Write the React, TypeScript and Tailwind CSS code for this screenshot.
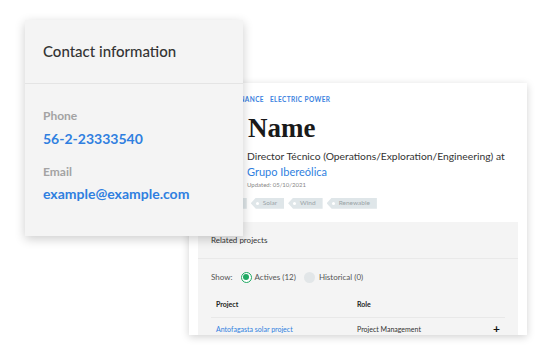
import React from "react";

const sans = "font-['Lato','Liberation_Sans',sans-serif]";

function Tag({ label }: { label: string }) {
  return (
    <div className="relative flex h-[11px] items-center bg-[#dfe6e9] pl-[12px] pr-[7px] text-[6.5px] text-[#9aa3a7] [clip-path:polygon(5px_0,100%_0,100%_100%,5px_100%,0_50%)]">
      <span className="absolute left-[5px] top-[4px] h-[3px] w-[3px] rounded-full bg-white" />
      {label}
    </div>
  );
}

export default function App() {
  return (
    <div className={`relative h-[353px] w-[555px] overflow-hidden bg-white ${sans}`}>
      {/* profile card (behind) */}
      <div className="absolute left-[189px] top-[83px] h-[252px] w-[338px] overflow-hidden bg-white shadow-[0_2px_8px_rgba(0,0,0,0.18)]">
        <div className="pl-[59px] pt-[12px]">
          <div className="-ml-[15px] flex gap-[6px] text-[6.5px] font-bold tracking-[0.4px] text-[#3b82e0]">
            <span>FINANCE</span>
            <span>ELECTRIC POWER</span>
          </div>
          <h1 className="mt-[8px] font-['Liberation_Serif',serif] text-[27px] font-bold leading-[30px] text-[#1a1a1a]">
            Name
          </h1>
          <p className="mt-[6px] -ml-[1px] text-[10.3px] leading-[14px] text-[#333]">
            Director Técnico (Operations/Exploration/Engineering) at
          </p>
          <p className="mt-[1px] -ml-[1px] text-[11px] leading-[16px] text-[#2f7fe0]">Grupo Ibereólica</p>
          <p className="-ml-[1px] text-[6px] leading-[9px] text-[#888]">Updated: 05/10/2021</p>
          <div className="mt-[9px] -ml-[40px] flex gap-[4px]">
            <Tag label="Energy" />
            <Tag label="Solar" />
            <Tag label="Wind" />
            <Tag label="Renewable" />
          </div>
        </div>

        <div className="ml-[9px] mt-[13px] h-[200px] w-[320px] bg-[#f4f4f4]">
          <div className="border-b border-[#e9e9e9] px-[13px] pb-[13px] pt-[13px] text-[8px] leading-[10px] text-[#333]">
            Related projects
          </div>
          <div className="flex items-center px-[13px] pt-[13px] text-[8px] leading-[10px] text-[#555]">
            <span className="mr-[8px]">Show:</span>
            <span className="mr-[3px] flex h-[11px] w-[11px] items-center justify-center rounded-full border-[1.5px] border-[#1faa63] bg-white">
              <span className="h-[6px] w-[6px] rounded-full bg-[#1faa63]" />
            </span>
            <span className="mr-[8px]">Actives (12)</span>
            <span className="mr-[4px] h-[11px] w-[11px] rounded-full bg-[#e2e6e8]" />
            <span>Historical (0)</span>
          </div>
          <div className="mx-[13px] mt-[17px] flex border-b border-[#e8e8e8] px-[5px] pb-[8px] text-[7px] font-bold leading-[9px] text-[#222]">
            <span className="w-[141px]">Project</span>
            <span>Role</span>
          </div>
          <div className="mx-[13px] flex items-center px-[5px] pt-[6px] text-[7px] leading-[10px]">
            <span className="w-[141px] text-[#2f7fe0]">Antofagasta solar project</span>
            <span className="flex-1 text-[#333]">Project Management</span>
            <span className="text-[12px] font-bold leading-[10px] text-[#111]">+</span>
          </div>
        </div>
      </div>

      {/* contact card (front) */}
      <div className="absolute left-[25px] top-[20px] h-[216px] w-[218px] bg-[#f4f4f4] shadow-[0_3px_10px_rgba(0,0,0,0.2)]">
        <div className="flex h-[64px] items-center border-b border-[#e4e4e4] px-[18px] text-[15px] font-medium text-[#333]">
          Contact information
        </div>
        <div className="px-[18px] pt-[24px]">
          <div className="text-[12px] font-bold leading-[16px] text-[#a3a3a3]">Phone</div>
          <div className="mt-[6px] text-[14px] font-bold leading-[18px] text-[#2f7fe0]">56-2-23333540</div>
          <div className="mt-[16px] text-[12px] font-bold leading-[16px] text-[#a3a3a3]">Email</div>
          <div className="mt-[5px] text-[14px] font-bold leading-[18px] text-[#2f7fe0]">example@example.com</div>
        </div>
      </div>
    </div>
  );
}
